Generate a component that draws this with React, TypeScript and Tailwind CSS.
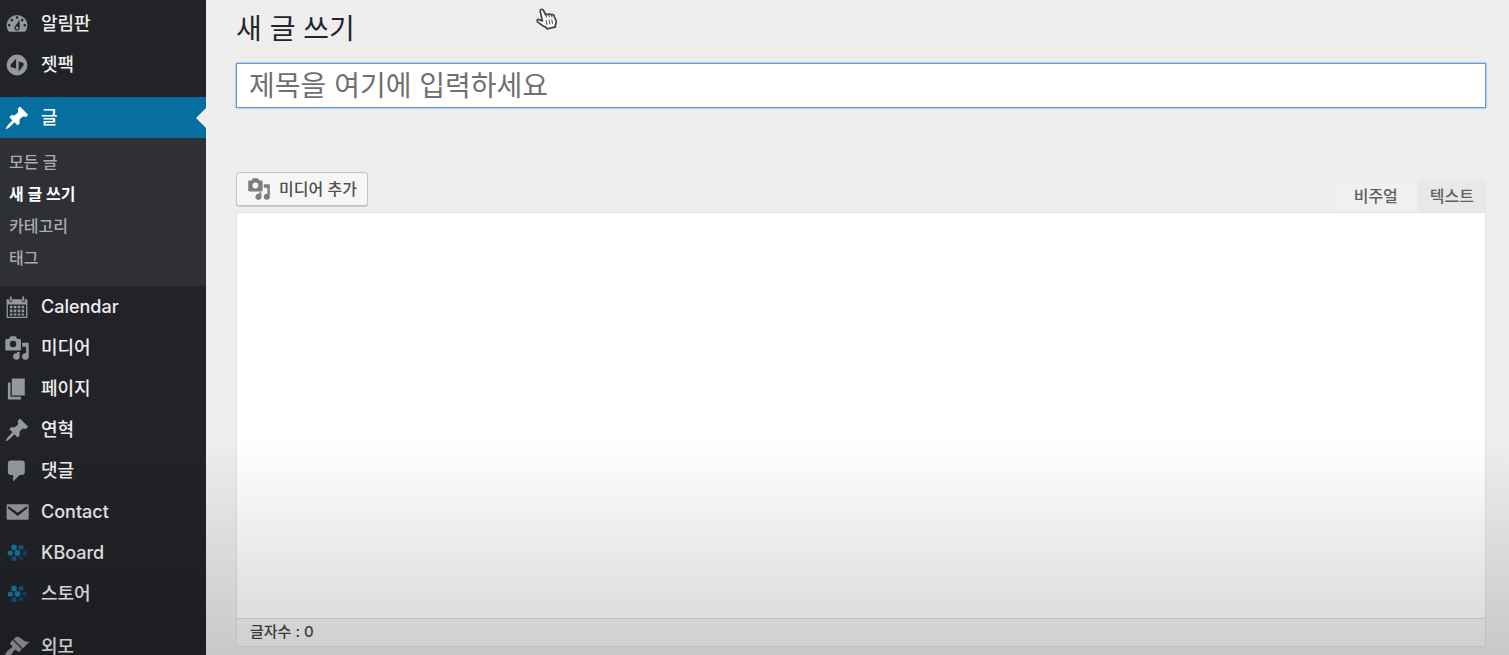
import React from "react";

/* =====================
   Types
===================== */

type IconName =
    | "dashboard"
    | "jetpack"
    | "pin"
    | "calendar"
    | "media"
    | "page"
    | "comment"
    | "mail"
    | "dots"
    | "brush";

interface MenuItem {
    label: string;
    icon: IconName;
}

interface SubmenuItem {
    label: string;
    current?: boolean;
}

/* =====================
   Data
===================== */

const topItems: MenuItem[] = [
    { label: "알림판", icon: "dashboard" },
    { label: "젯팩", icon: "jetpack" },
];

const submenuItems: SubmenuItem[] = [
    { label: "모든 글" },
    { label: "새 글 쓰기", current: true },
    { label: "카테고리" },
    { label: "태그" },
];

const mainItems: MenuItem[] = [
    { label: "Calendar", icon: "calendar" },
    { label: "미디어", icon: "media" },
    { label: "페이지", icon: "page" },
    { label: "연혁", icon: "pin" },
    { label: "댓글", icon: "comment" },
    { label: "Contact", icon: "mail" },
    { label: "KBoard", icon: "dots" },
    { label: "스토어", icon: "dots" },
];

/* =====================
   Icons
===================== */

const iconShapes: Record<IconName, React.ReactNode> = {
    dashboard: (
        <path
            fillRule="evenodd"
            d="M3.76 16h12.48A8 8 0 1 0 3.76 16zM10 4a1 1 0 1 1 0 2 1 1 0 0 1 0-2zM6 6a1 1 0 1 1 0 2 1 1 0 0 1 0-2zm8 0a1 1 0 1 1 0 2 1 1 0 0 1 0-2zm-5.37 5.55L12 7v6a2 2 0 1 1-3.37-1.45zM4 10a1 1 0 1 1 0 2 1 1 0 0 1 0-2zm12 0a1 1 0 1 1 0 2 1 1 0 0 1 0-2zm-5 3a1 1 0 1 0-2 0 1 1 0 0 0 2 0z"
        />
    ),
    jetpack: (
        <path
            fillRule="evenodd"
            d="M10 2a8 8 0 1 0 0 16 8 8 0 0 0 0-16zM9.300 5v7.700L6.300 12c-1.400-.4-1.600-1.300-1-2.400zM11.300 15V7.300l2.600.7c1.400.4 1.600 1.300 1 2.400z"
        />
    ),
    pin: (
        <path d="M10.44 3.02l1.82-1.82 6.36 6.35-1.83 1.82c-1.05-.68-2.48-.57-3.41.36l-.75.75c-.92.93-1.04 2.35-.35 3.41l-1.83 1.82-2.41-2.41-2.8 2.79c-.42.42-3.38 2.71-3.8 2.29s1.86-3.39 2.28-3.81l2.79-2.79L4.1 9.36l1.83-1.82c1.05.69 2.48.57 3.4-.36l.75-.75c.93-.92 1.05-2.35.36-3.41z" />
    ),
    calendar: (
        <>
            <path
                fillRule="evenodd"
                d="M2 4h2v1.2a1.2 1.2 0 0 0 2.4 0V4h7.2v1.2a1.2 1.2 0 0 0 2.4 0V4h2v14.500H2zM3 8v9.500h14V8z"
            />
            <path d="M4.500 2.500a.7.7 0 0 1 1.400 0v2.600a.7.7 0 0 1-1.400 0zM14.100 2.500a.7.7 0 0 1 1.400 0v2.600a.7.7 0 0 1-1.400 0z" />
            <path d="M4.500 9h2v2h-2zM7.500 9h2v2h-2zM10.500 9h2v2h-2zM13.500 9h2v2h-2zM4.500 12h2v2h-2zM7.500 12h2v2h-2zM10.500 12h2v2h-2zM13.500 12h2v2h-2zM4.500 15h2v1.600h-2zM7.500 15h2v1.600h-2zM10.500 15h2v1.600h-2zM13.500 15h2v1.600h-2z" />
        </>
    ),
    media: (
        <path
            fillRule="evenodd"
            d="M13 11V4c0-.55-.45-1-1-1h-1.670L9 1H5L3.670 3H2c-.55 0-1 .45-1 1v7c0 .55.45 1 1 1h10c.55 0 1-.45 1-1zM7 4.500a2.500 2.500 0 1 1 0 5 2.500 2.500 0 0 1 0-5zM14 6h5v10.500a2.500 2.500 0 1 1-2-2.450V9h-3V6zm-4 8.050V13h2v3.500a2.500 2.500 0 1 1-2-2.450z"
        />
    ),
    page: <path d="M6 15V2h10v13H6zm-1 1h8v2H3V5h2v11z" />,
    comment: (
        <path d="M5 2h9c1.100 0 2 .9 2 2v7c0 1.100-.9 2-2 2h-2l-5 5v-5H5c-1.100 0-2-.9-2-2V4c0-1.100.9-2 2-2z" />
    ),
    mail: (
        <path
            fillRule="evenodd"
            d="M3 4h15c.6 0 1 .4 1 1v10c0 .6-.4 1-1 1H3c-.6 0-1-.4-1-1V5c0-.6.4-1 1-1zm.6 1.600L2.800 7l7.700 6 7.700-6-.8-1.400-6.900 5z"
        />
    ),
    dots: (
        <>
            <g fill="#14789a">
                <circle cx="7.700" cy="5.700" r="2.200" />
                <circle cx="4.800" cy="10" r="2" />
                <circle cx="10.300" cy="10" r="2.300" />
            </g>
            <g fill="#185474">
                <circle cx="13.100" cy="5.700" r="2" />
                <circle cx="7.700" cy="14.300" r="2" />
            </g>
            <g fill="#1b3d58">
                <circle cx="15.900" cy="10" r="2" />
                <circle cx="13.100" cy="14.300" r="1.900" />
            </g>
        </>
    ),
    brush: (
        <path d="M14.480 11.060L7.410 3.990l1.500-1.500c.5-.56 2.300-.47 3.510.32 1.210.8 1.430 1.280 2.910 2.100 1.180.64 2.450 1.260 4.450.85zm-.71.71L6.700 4.700 4.930 6.470c-.39.39-.39 1.020 0 1.410l1.060 1.060c.39.39.39 1.030 0 1.420-.6.6-1.430 1.110-2.210 1.690-.35.26-.7.53-1.010.84C1.430 14.230.4 16.080 1.400 17.070c.99 1 2.840-.03 4.180-1.360.31-.31.58-.66.85-1.020.57-.78 1.080-1.610 1.690-2.210.39-.39 1.020-.39 1.410 0l1.060 1.060c.39.39 1.020.39 1.410 0z" />
    ),
};

const Icon: React.FC<{ name: IconName; className: string }> = ({ name, className }) => (
    <svg viewBox="0 0 20 20" fill="currentColor" aria-hidden="true" className={className}>
        {iconShapes[name]}
    </svg>
);

/* =====================
   Sidebar
===================== */

const MenuLink: React.FC<{ item: MenuItem }> = ({ item }) => (
    <a
        href="#"
        className="flex h-[41px] shrink-0 items-center gap-[11px] pl-1 text-[18px] font-medium text-[#eeeeee]"
    >
        <Icon name={item.icon} className="size-[26px] shrink-0 text-[#94979b]" />
        {item.label}
    </a>
);

const Sidebar: React.FC = () => (
    <nav className="flex w-[206px] shrink-0 flex-col overflow-hidden bg-[#212328] pt-[3px]">
        {topItems.map((item) => (
            <MenuLink key={item.label} item={item} />
        ))}

        {/* Open section */}
        <a
            href="#"
            className="relative mt-3 flex h-[41px] shrink-0 items-center gap-[11px] bg-[#066fa0] pl-1 text-[18px] font-medium text-white"
        >
            <Icon name="pin" className="size-[26px] shrink-0" />
            글
            <span className="absolute top-1/2 right-0 -translate-y-1/2 border-y-10 border-r-10 border-y-transparent border-r-[#eeeeee]" />
        </a>
        <ul className="shrink-0 bg-[#2e3036] pt-2 pb-3">
            {submenuItems.map((item) => (
                <li key={item.label}>
                    <a
                        href="#"
                        className={
                            item.current
                                ? "flex h-8 items-center pl-[9px] text-[16px] font-bold text-white"
                                : "flex h-8 items-center pl-[9px] text-[16px] font-medium text-[#a9abaf]"
                        }
                    >
                        {item.label}
                    </a>
                </li>
            ))}
        </ul>

        {mainItems.map((item) => (
            <MenuLink key={item.label} item={item} />
        ))}
        <div className="h-3 shrink-0" />
        <MenuLink item={{ label: "외모", icon: "brush" }} />
    </nav>
);

/* =====================
   Editor
===================== */

const Editor: React.FC = () => (
    <main className="flex min-w-0 flex-1 flex-col pt-[9px] pr-[23px] pb-2 pl-[30px]">
        <h1 className="text-[28px] leading-[40px] text-[#23252a]">새 글 쓰기</h1>

        <input
            type="text"
            aria-label="제목"
            placeholder="제목을 여기에 입력하세요"
            className="mt-3.5 h-[45px] w-full shrink-0 border border-[#5b9dd9] bg-white px-3 text-[28px] text-[#32373c] shadow-[0_0_2px_#5b9dd9] outline-none placeholder:text-[#707070]"
        />

        {/* Toolbar */}
        <div className="mt-16 flex shrink-0 items-end justify-between">
            <button
                type="button"
                className="mb-1.5 flex h-[34px] items-center gap-2 rounded-[3px] border border-[#c4c4c4] bg-[#f6f6f6] px-2.5 text-[16px] font-medium text-[#505050] shadow-[0_1px_0_#cccccc]"
            >
                <Icon name="media" className="size-[24px] text-[#7d7d7d]" />
                미디어 추가
            </button>
            <div className="flex text-[16px] font-medium text-[#5f5f5f]">
                <button type="button" className="h-8 bg-[#f0f0f1] px-4">
                    비주얼
                </button>
                <button type="button" className="ml-1 h-8 bg-[#e8e8e8] px-3">
                    텍스트
                </button>
            </div>
        </div>

        {/* Text area and status line */}
        <div className="flex min-h-0 flex-1 flex-col border border-[#e2e2e2] bg-white">
            <textarea
                aria-label="본문"
                className="min-h-0 w-full flex-1 resize-none bg-white p-3 outline-none"
            />
            <div className="h-7 shrink-0 border-t border-[#dedede] bg-[#f5f5f5] pl-[13px] text-[15px] leading-[26px] font-medium text-[#444444]">
                글자수 : 0
            </div>
        </div>
    </main>
);

const HandPointer: React.FC = () => (
    <svg
        viewBox="0 0 22 22"
        aria-hidden="true"
        className="pointer-events-none absolute top-2 left-[536px] size-[22px]"
    >
        <path
            d="M5 1.500c1-.6 2 0 2.500 1l2.300 4.600c.2-1 1.900-1.400 2.700-.3.500-.9 2.200-1 2.800.1.900-.7 2.200-.3 2.700.9l1.800 4.200c.8 1.900.5 3.500-.5 5.200l.2 1.700-8.300 2-1.300-1.700c-2.200-.5-4.100-1.900-5.700-3.300L1.600 13.800c-1.200-1.200.1-2.800 1.600-2.200l3.200 1.300L4.300 3.600c-.3-.9 0-1.700.7-2.100z"
            fill="#fafafa"
            stroke="#444444"
            strokeWidth="1.700"
            strokeLinejoin="round"
        />
        <path
            d="M9.800 7.100l.8 2.300M12.500 6.800l.8 2.300M15.300 6.900l.7 2.200M10.200 12.500l.8 4M13 12l.8 4M15.800 11.500l.7 4"
            fill="none"
            stroke="#555555"
            strokeLinecap="round"
        />
    </svg>
);

const App: React.FC = () => (
    <div className="relative flex h-screen overflow-hidden bg-[#eeeeef] font-['Inter','Noto_Sans_CJK_KR',sans-serif]">
        <Sidebar />
        <Editor />
        <HandPointer />
        {/* Shade rising from the bottom edge */}
        <div className="pointer-events-none absolute inset-x-0 bottom-0 h-1/3 bg-linear-to-t from-black/16 to-transparent" />
    </div>
);

export default App;
